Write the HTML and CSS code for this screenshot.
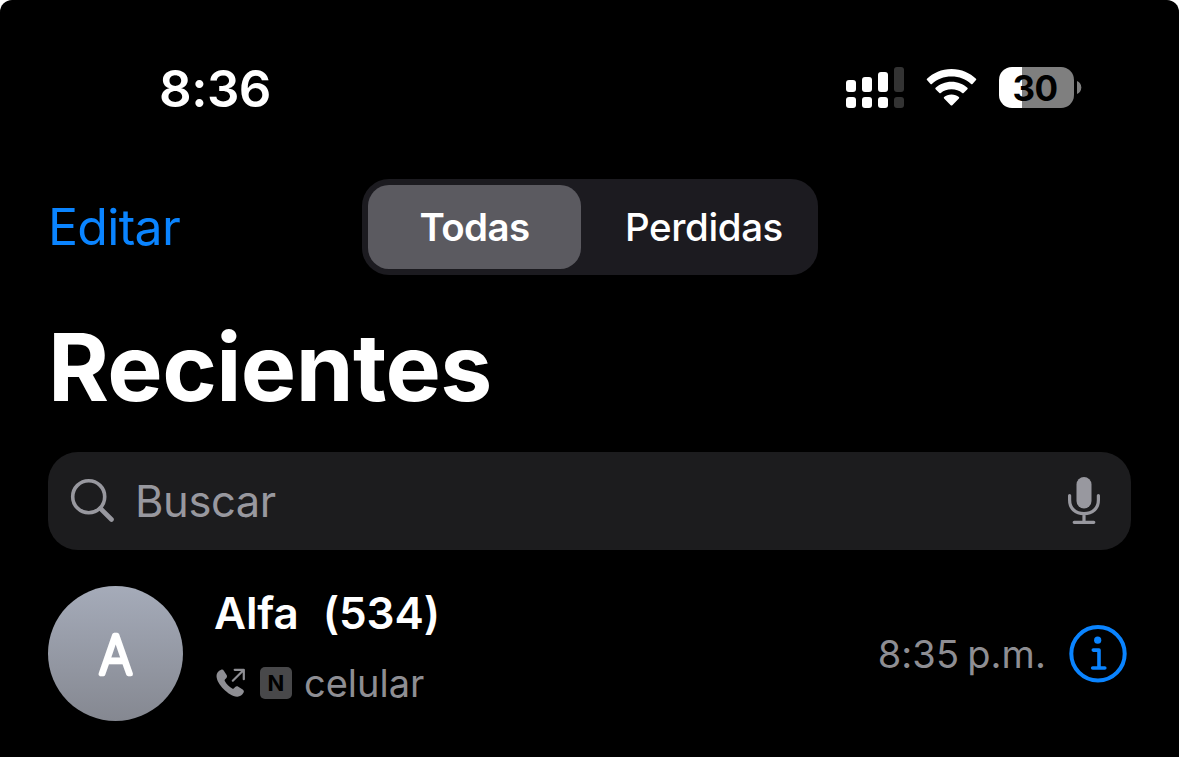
FILE: index.html
```
<!DOCTYPE html>
<html lang="es">
<head>
<meta charset="UTF-8" />
<meta name="viewport" content="width=device-width, initial-scale=1.0" />
<title>Recientes</title>
<link rel="stylesheet" href="styles.css">
</head>
<body>
<div class="screen">
  <!-- Barra de estado -->
  <header class="status-bar">
    <time class="clock">8:36</time>
    <div class="status-icons">
      <svg class="signal" width="58" height="42" viewBox="0 0 58 42" fill="#fff">
        <rect x="0" y="13" width="10" height="12" rx="3"/>
        <rect x="16" y="10" width="10" height="15" rx="3"/>
        <rect x="32" y="5" width="10" height="20" rx="3"/>
        <rect x="0" y="30" width="10" height="11" rx="3"/>
        <rect x="16" y="30" width="10" height="11" rx="3"/>
        <rect x="32" y="30" width="10" height="11" rx="3"/>
        <g fill="#333">
          <rect x="48" y="0" width="10" height="25" rx="3"/>
          <rect x="48" y="30" width="10" height="11" rx="3"/>
        </g>
      </svg>
      <svg class="wifi" width="51" height="38" viewBox="0 0 51 38" fill="#fff">
        <path d="M25.500 0C35.500 0 44 4 50 9.700Q50.700 10.400 50 11.100L46.500 14.900Q45.800 15.600 45.100 14.900C40 10.300 33.200 7.600 25.500 7.600S11 10.300 5.900 14.900Q5.200 15.600 4.500 14.900L1 11.100Q.300 10.400 1 9.700C7 4 15.500 0 25.500 0Z"/>
        <path d="M25.500 12.800C31.800 12.800 37.300 15.200 41.400 18.800Q42.100 19.500 41.400 20.200L37.600 24Q36.900 24.700 36.200 24C33.200 21.600 29.800 20.300 25.500 20.300S17.800 21.600 14.800 24Q14.100 24.700 13.400 24L9.600 20.200Q8.900 19.500 9.600 18.800C13.700 15.200 19.200 12.800 25.500 12.800Z"/>
        <path d="M25.500 25.600C28.500 25.600 31 26.500 32.900 28.100Q33.600 28.800 32.900 29.500L26.300 36.200Q25.500 37 24.700 36.200L18.100 29.500Q17.400 28.800 18.100 28.100C20 26.500 22.500 25.600 25.500 25.600Z"/>
      </svg>
      <div class="battery">
        <span class="battery-level">30</span>
        <svg width="5" height="13" viewBox="0 0 5 13"><path d="M0 0C2.600 1 4.300 3.500 4.300 6.500S2.600 12 0 13Z" fill="#7f7f7f"/></svg>
      </div>
    </div>
  </header>

  <!-- Navegación -->
  <nav class="toolbar">
    <a class="edit" href="#">Editar</a>
    <div class="segmented">
      <button class="segment active">Todas</button>
      <button class="segment">Perdidas</button>
    </div>
  </nav>

  <main>
    <h1>Recientes</h1>

    <!-- Buscador -->
    <div class="search">
      <svg width="46" height="46" viewBox="0 0 46 46" fill="none" stroke="#98989f" stroke-linecap="round">
        <circle cx="18.700" cy="18.700" r="16" stroke-width="3.600"/>
        <path d="M30.500 30.500L41.500 41.500" stroke-width="4.600"/>
      </svg>
      <span class="placeholder">Buscar</span>
      <svg class="mic" width="34" height="50" viewBox="0 0 34 50" fill="none" stroke="#98989f" stroke-width="3.200" stroke-linecap="round">
        <rect x="9.500" y="1" width="15" height="31.500" rx="7.500" fill="#98989f" stroke="none"/>
        <path d="M2.600 19.500V24C2.600 32.500 8.500 37.700 17 37.700S31.400 32.500 31.400 24V19.500M17 38V46.300M7.200 46.300H26.800"/>
      </svg>
    </div>

    <!-- Llamadas -->
    <ul class="calls">
      <li class="call">
        <div class="avatar">
          <svg width="135" height="135" viewBox="0 0 135 135">
            <text class="initial" x="67.800" y="87.800" text-anchor="middle" textLength="33" lengthAdjust="spacingAndGlyphs">A</text>
          </svg>
        </div>
        <div class="call-info">
          <div class="name"><span>Alfa</span><span class="count">(534)</span></div>
          <div class="detail">
            <svg width="30" height="30" viewBox="0 0 30 30">
              <path d="M5.200 1.700C6.300 1.300 7.300 1.800 8 2.900L10.600 7C11.300 8.100 11.100 9.300 10.200 10.200L8.900 11.500C8.500 11.900 8.500 12.400 8.800 13C10.300 15.900 13.200 18.900 16.200 20.600C16.800 20.900 17.300 20.900 17.700 20.500L19.200 19C20 18.200 21.200 18.100 22.300 18.700L26.700 21.600C27.900 22.400 28.200 23.500 27.600 24.600C26.200 27.300 24 28.800 21.100 28.700C16.500 28.500 11.500 25 7.500 21C3.500 17 .600 12.200.500 8C.500 5.100 2.200 2.900 5.200 1.700Z" fill="#8e8e93"/>
              <path d="M16.800 12.700L27.600 2M18.700 1.800H27.800V11.200" fill="none" stroke="#8e8e93" stroke-width="2.200" stroke-linecap="round" stroke-linejoin="round"/>
            </svg>
            <span class="line-badge">N</span>
            <span class="label">celular</span>
          </div>
        </div>
        <time class="call-time">8:35<span class="meridiem">p.m.</span></time>
        <svg class="info" width="58" height="58" viewBox="0 0 58 58" fill="none" stroke="#0a84ff" stroke-width="3.600" stroke-linecap="round" stroke-linejoin="round">
          <circle cx="29" cy="28.700" r="26.700" stroke-width="4"/>
          <circle cx="28.700" cy="15.200" r="3.600" fill="#0a84ff" stroke="none"/>
          <path d="M24.300 25.100H30V43M23.700 43H35.800"/>
        </svg>
      </li>
    </ul>
  </main>
</div>
</body>
</html>
```

FILE: styles.css
```
:root {
  --font-body: Inter, "Liberation Sans", Arial, sans-serif;
  --color-accent: #0a84ff;
  --color-muted: #8e8e93;
  --color-field: #1c1c1e;
}

* {
  box-sizing: border-box;
}

body {
  margin: 0;
  background: #fff;
  font-family: var(--font-body);
}

.screen {
  height: 757px;
  padding: 0 48px;
  overflow: hidden;
  background: #000; color: #fff;
  border-radius: 12px 12px 0 0;
}

/* バー */
.status-bar {
  display: flex; justify-content: space-between; align-items: center;
  height: 179px;
  padding: 0 49px 3px 111px;
}
.clock {
  padding-top: 1px;
  font-size: 51px; font-weight: 600; line-height: 60px; letter-spacing: -0.5px;
}
.status-icons {
  display: flex; align-items: center;
}
.wifi {
  margin: 0 22px;
}
.battery {
  display: flex; align-items: center; gap: 3px;
  padding-bottom: 1px;
}
.battery-level {
  width: 75px; height: 41px; padding-right: 3px;
  border-radius: 13px;
  background: linear-gradient(to right, #fff 23px, #7f7f7f 23px);
  color: #000;
  font-size: 35px; font-weight: 700; line-height: 42px; text-align: center;
  letter-spacing: -0.5px;
}

/* ツールバー */
.toolbar {
  display: grid; grid-template-columns: 314px 456px; align-items: center;
}
.edit {
  color: var(--color-accent); text-decoration: none;
  font-size: 50px; line-height: 60px; letter-spacing: -0.7px;
}
.segmented {
  display: grid; grid-template-columns: 213px 1fr;
  height: 96px; padding: 6px;
  background: #1c1b20; border-radius: 27px;
}
.segment {
  padding: 0 0 0 15px; border: none; border-radius: 21px;
  background: none; color: #fff;
  font-family: inherit; font-size: 38.5px; font-weight: 500; letter-spacing: -0.4px;
}
.segment.active {
  padding: 0;
  background: #5b5a60; font-weight: 600; letter-spacing: -0.6px;
}

h1 {
  margin: 0; padding: 44px 0 37px;
  font-size: 93px; font-weight: 700; line-height: 96px; letter-spacing: -0.6px;
}

/* 検索 */
.search {
  display: flex; align-items: center;
  height: 98px; padding: 0 30px 0 22px;
  background: var(--color-field); border-radius: 30px;
}
.placeholder {
  margin-left: 19px;
  color: #98989f;
  font-size: 43.5px; line-height: 60px; letter-spacing: -0.4px;
}
.mic {
  margin-left: auto;
}

/* 通話履歴 */
.calls {
  margin: 36px 0 0; padding: 0; list-style: none;
}
.call {
  display: flex; align-items: center;
  height: 135px;
}
.avatar {
  width: 135px; height: 135px;
  border-radius: 50%;
  background: linear-gradient(#a5abb9, #858891);
}
.initial {
  fill: #fff; stroke: #fff; stroke-width: 4.6px; stroke-linejoin: round;
  font-size: 53px; font-weight: 200;
}
.call-info {
  margin-left: 31px; padding-bottom: 11px;
}
.name {
  display: flex; gap: 24px;
  font-size: 44px; font-weight: 600; line-height: 60px; letter-spacing: -0.1px;
}
.detail {
  display: flex; align-items: center;
  margin: 10px 0 0 2px;
  color: var(--color-muted);
}
.line-badge {
  width: 32px; height: 32px; margin: 0 12px 0 14px;
  border-radius: 5px;
  background: #48484a; color: #000;
  font-size: 22px; font-weight: 700; line-height: 32px; text-align: center;
}
.label {
  font-size: 38px; line-height: 60px;
}
.call-time {
  display: flex; gap: 8px;
  margin-left: auto;
  color: var(--color-muted);
  font-size: 38px; line-height: 60px; letter-spacing: 0.1px;
}
.info {
  margin: 0 4px 0 23px;
}
```
